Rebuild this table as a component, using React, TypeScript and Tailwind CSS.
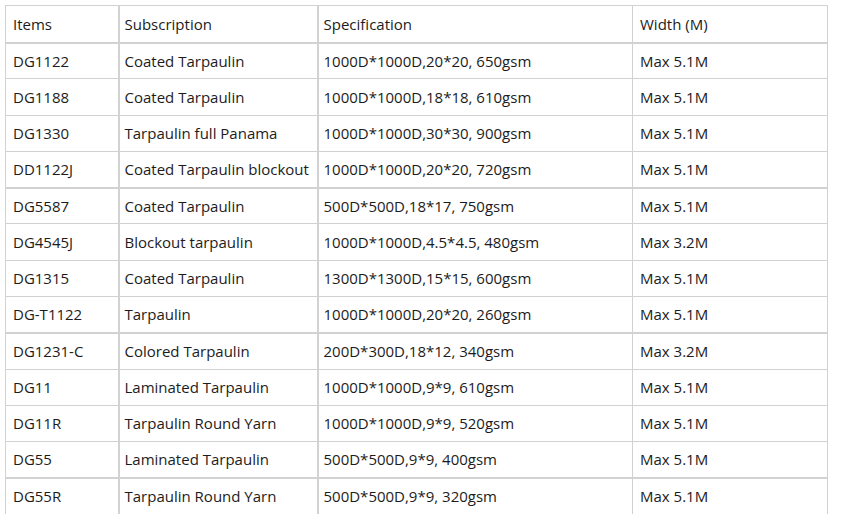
import React from "react";

const rows: [string, string, string, string][] = [
  ["DG1122", "Coated Tarpaulin", "1000D*1000D,20*20, 650gsm", "Max 5.1M"],
  ["DG1188", "Coated Tarpaulin", "1000D*1000D,18*18, 610gsm", "Max 5.1M"],
  ["DG1330", "Tarpaulin full Panama", "1000D*1000D,30*30, 900gsm", "Max 5.1M"],
  ["DD1122J", "Coated Tarpaulin blockout", "1000D*1000D,20*20, 720gsm", "Max 5.1M"],
  ["DG5587", "Coated Tarpaulin", "500D*500D,18*17, 750gsm", "Max 5.1M"],
  ["DG4545J", "Blockout tarpaulin", "1000D*1000D,4.5*4.5, 480gsm", "Max 3.2M"],
  ["DG1315", "Coated Tarpaulin", "1300D*1300D,15*15, 600gsm", "Max 5.1M"],
  ["DG-T1122", "Tarpaulin", "1000D*1000D,20*20, 260gsm", "Max 5.1M"],
  ["DG1231-C", "Colored Tarpaulin", "200D*300D,18*12, 340gsm", "Max 3.2M"],
  ["DG11", "Laminated Tarpaulin", "1000D*1000D,9*9, 610gsm", "Max 5.1M"],
  ["DG11R", "Tarpaulin Round Yarn", "1000D*1000D,9*9, 520gsm", "Max 5.1M"],
  ["DG55", "Laminated Tarpaulin", "500D*500D,9*9, 400gsm", "Max 5.1M"],
  ["DG55R", "Tarpaulin Round Yarn", "500D*500D,9*9, 320gsm", "Max 5.1M"],
];

// rows followed by a heavier rule
const thick = new Set([3, 7, 11]);

export default function App() {
  return (
    <div className="w-[863px] h-[514px] bg-white pl-[5px] pt-[5px] overflow-hidden font-['Open_Sans',sans-serif] text-[15px] text-[#1c1c1c]">
      <table className="table-fixed border-collapse w-[822px]">
        <colgroup>
          <col className="w-[113px]" />
          <col className="w-[199px]" />
          <col className="w-[315px]" />
          <col className="w-[195px]" />
        </colgroup>
        <thead>
          <tr className="h-[37px] border-b-2 border-[#d2d2d2]">
            <th className="font-normal text-left pl-[7px] border border-[#d2d2d2] border-r-2">Items</th>
            <th className="font-normal text-left pl-[5px] border border-[#d2d2d2] border-r-2">Subscription</th>
            <th className="font-normal text-left pl-[5px] border border-[#d2d2d2]">Specification</th>
            <th className="font-normal text-left pl-[7px] border border-[#d2d2d2]">Width (M)</th>
          </tr>
        </thead>
        <tbody>
          {rows.map((r, i) => (
            <tr
              key={r[0]}
              className={
                "h-[36.3px] " +
                (thick.has(i) ? "border-b-2 border-[#d2d2d2]" : "border-b border-[#d2d2d2]")
              }
            >
              <td className="pl-[7px] border border-[#d2d2d2] border-r-2">{r[0]}</td>
              <td className="pl-[5px] border border-[#d2d2d2] border-r-2 whitespace-nowrap">{r[1]}</td>
              <td className="pl-[5px] border border-[#d2d2d2]">{r[2]}</td>
              <td className="pl-[7px] border border-[#d2d2d2]">{r[3]}</td>
            </tr>
          ))}
        </tbody>
      </table>
    </div>
  );
}
